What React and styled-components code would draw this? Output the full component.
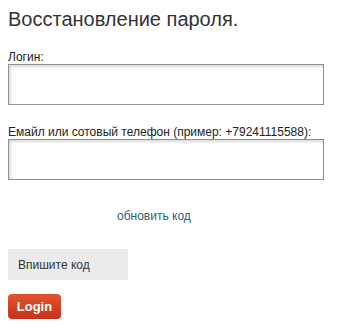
import styled, { createGlobalStyle } from "styled-components";

const GlobalStyle = createGlobalStyle`
  html, body {
    margin: 0;
    padding: 0;
    background: #fff;
  }
  body {
    font-family: Arial, "Liberation Sans", sans-serif;
    color: #333;
  }
`;

const Page = styled.div`
  width: 343px;
  padding: 0 8px;
  box-sizing: border-box;
`;

const Title = styled.h1`
  font-size: 20px;
  font-weight: normal;
  color: #333;
  margin: 0;
  padding-top: 7px;
  line-height: 24px;
`;

const Form = styled.form`
  display: flex;
  flex-direction: column;
  margin-top: 19px;
`;

const Field = styled.div`
  display: flex;
  flex-direction: column;
  margin-bottom: ${props => props.gap || 17}px;
`;

const Label = styled.label`
  font-size: 12px;
  line-height: 14px;
  color: #222;
`;

const TextInput = styled.input`
  width: 316px;
  height: 41px;
  box-sizing: border-box;
  border: 1px solid #8f8f8f;
  box-shadow: inset 2px 2px 3px rgba(0, 0, 0, 0.15);
  background: #fff;
  outline: none;
  padding: 4px 6px;
  font-size: 12px;
`;

const RefreshLink = styled.a`
  align-self: flex-start;
  margin-left: 109px;
  font-size: 12px;
  line-height: 14px;
  color: #2b5f72;
  text-decoration: none;
  margin-bottom: 26px;
`;

const CodeInput = styled.input`
  width: 120px;
  height: 31px;
  box-sizing: border-box;
  border: none;
  background: #ebebeb;
  padding: 0 10px;
  font-family: Arial, "Liberation Sans", sans-serif;
  font-size: 12px;
  outline: none;
  margin-bottom: 14px;

  &::placeholder {
    color: #333;
  }
`;

const LoginButton = styled.button`
  align-self: flex-start;
  width: 53px;
  height: 25px;
  border: none;
  border-radius: 4px;
  background: linear-gradient(#e2532d, #c7331a);
  color: #fff;
  font-family: Arial, "Liberation Sans", sans-serif;
  font-weight: bold;
  font-size: 13px;
  padding: 0;
  cursor: pointer;
`;

export default function App() {
  return (
    <Page>
      <GlobalStyle />
      <Title>Восстановление пароля.</Title>
      <Form onSubmit={e => e.preventDefault()}>
        <Field gap={20}>
          <Label>Логин:</Label>
          <TextInput type="text" />
        </Field>
        <Field gap={29}>
          <Label>Емайл или сотовый телефон (пример: +79241115588):</Label>
          <TextInput type="text" />
        </Field>
        <RefreshLink href="#">обновить код</RefreshLink>
        <CodeInput type="text" placeholder="Впишите код" />
        <LoginButton type="submit">Login</LoginButton>
      </Form>
    </Page>
  );
}
